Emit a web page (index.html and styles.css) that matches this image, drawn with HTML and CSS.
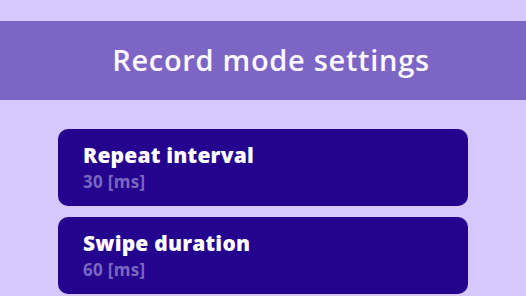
FILE: index.html
```html
<!DOCTYPE html>
<html>
<head>
<meta charset="utf-8">
<link rel="stylesheet" href="styles.css">
</head>
<body>
<header class="topbar">
  <h1 class="title">Record mode settings</h1>
</header>
<main class="list">
  <section class="card">
    <div class="card-title">Repeat interval</div>
    <div class="card-sub">30 [ms]</div>
  </section>
  <section class="card">
    <div class="card-title">Swipe duration</div>
    <div class="card-sub">60 [ms]</div>
  </section>
</main>
</body>
</html>
```
FILE: styles.css
```css
html, body {
  margin: 0;
  padding: 0;
}
body {
  background: #d6c8fe;
  font-family: "Open Sans", "Noto Sans", sans-serif;
  width: 526px;
  height: 296px;
  overflow: hidden;
}
.topbar {
  margin-top: 21px;
  height: 79px;
  background: #7c65c4;
  display: flex;
  align-items: center;
  justify-content: center;
  padding-left: 16px;
  padding-bottom: 2px;
  box-sizing: border-box;
}
.title {
  margin: 0;
  color: #fbf8ff;
  font-size: 29px;
  font-weight: 600;
  letter-spacing: 0.7px;
}
.list {
  padding: 29px 58px 0 58px;
  display: flex;
  flex-direction: column;
  gap: 11px;
}
.card {
  height: 77px;
  box-sizing: border-box;
  background: #24048f;
  border-radius: 10px;
  padding: 13px 25px 0 25px;
  display: flex;
  flex-direction: column;
}
.card-title {
  color: #ffffff;
  font-size: 21px;
  font-weight: 800;
  line-height: 27px;
  letter-spacing: 0.2px;
}
.card-sub {
  margin-top: 2px;
  color: #7a68c0;
  font-size: 17px;
  font-weight: 700;
  line-height: 22px;
  letter-spacing: 0.3px;
}
```
